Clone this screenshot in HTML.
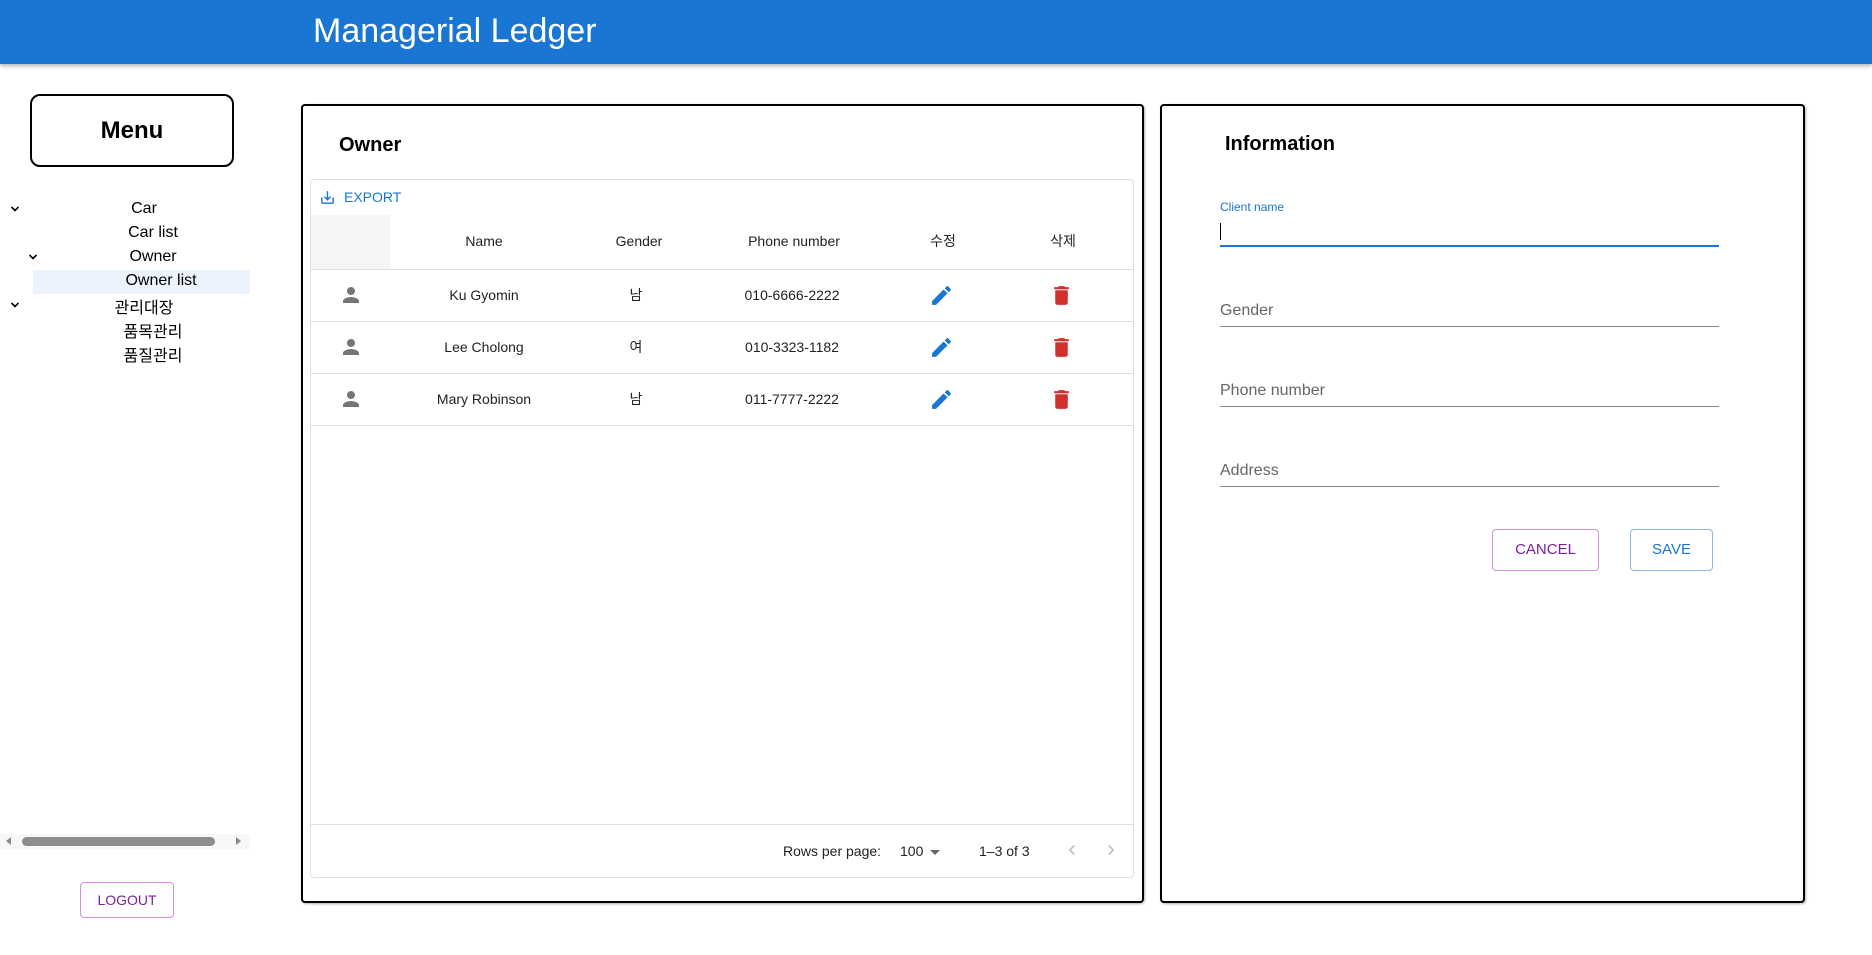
<!DOCTYPE html>
<html><head><meta charset="utf-8"><style>
*{box-sizing:border-box;margin:0;padding:0}
body{width:1872px;height:955px;background:#fff;font-family:"Liberation Sans","Noto Sans CJK KR",sans-serif;position:relative;overflow:hidden;color:#000}
.a{position:absolute}
.hdr{left:0;top:0;width:1872px;height:64px;background:#1976d2;box-shadow:0 2px 4px rgba(0,0,0,.3)}
.hdr span{position:absolute;left:313px;top:12px;color:#fff;font-size:34px}
.menu{left:30px;top:94px;width:204px;height:73px;border:2px solid #000;border-radius:10px;font-weight:bold;font-size:24px;text-align:center;line-height:69px}
.t{font-size:16px;transform:translateX(-50%);white-space:nowrap}
.panel{border:2px solid #000;border-radius:4px;box-shadow:1px 1px 2px rgba(0,0,0,.3)}
.grid{left:310px;top:179px;width:824px;height:699px;border:1px solid #e0e0e0;border-radius:4px}
.c{font-size:14px;color:#222;transform:translate(-50%,-50%);white-space:nowrap}
.line{height:1px;background:#e0e0e0}
.lbl{font-size:16px;color:#666}
.ul{height:1px;background:#888;width:499px;left:1220px}
.btn{border:1px solid;border-radius:4px;font-size:15px;text-align:center}
</style></head><body>
<div class="a hdr"><span>Managerial Ledger</span></div>
<div class="a menu">Menu</div>

<svg class="a" style="left:10px;top:205px" width="10" height="8" viewBox="0 0 10 8"><path d="M1.5 2 5 5.5 8.5 2" fill="none" stroke="#000" stroke-width="1.6"/></svg>
<div class="a t" style="left:144px;top:200px">Car</div>
<div class="a t" style="left:153px;top:224px">Car list</div>
<svg class="a" style="left:28px;top:253px" width="10" height="8" viewBox="0 0 10 8"><path d="M1.5 2 5 5.5 8.5 2" fill="none" stroke="#000" stroke-width="1.6"/></svg>
<div class="a t" style="left:153px;top:248px">Owner</div>
<div class="a" style="left:33px;top:270px;width:217px;height:24px;background:#edf3fc"></div>
<div class="a t" style="left:161px;top:272px">Owner list</div>
<svg class="a" style="left:10px;top:301px" width="10" height="8" viewBox="0 0 10 8"><path d="M1.5 2 5 5.5 8.5 2" fill="none" stroke="#000" stroke-width="1.6"/></svg>
<div class="a t" style="left:144px;top:294px">관리대장</div>
<div class="a t" style="left:153px;top:318px">품목관리</div>
<div class="a t" style="left:153px;top:342px">품질관리</div>

<div class="a" style="left:0;top:834px;width:250px;height:15px;background:#f7f7f7"></div>
<div class="a" style="left:6px;top:837px;width:0;height:0;border-top:4px solid transparent;border-bottom:4px solid transparent;border-right:5px solid #888"></div>
<div class="a" style="left:236px;top:837px;width:0;height:0;border-top:4px solid transparent;border-bottom:4px solid transparent;border-left:5px solid #888"></div>
<div class="a" style="left:22px;top:837px;width:193px;height:9px;background:#8d8d8d;border-radius:5px"></div>

<div class="a btn" style="left:80px;top:882px;width:94px;height:36px;line-height:34px;color:#7b1fa2;border-color:#ce93d8;font-size:14px">LOGOUT</div>

<div class="a panel" style="left:301px;top:104px;width:843px;height:799px"></div>
<div class="a" style="left:339px;top:134px;font-size:20px;font-weight:bold">Owner</div>
<div class="a grid"></div>
<svg class="a" style="left:319px;top:189px" width="17" height="17" viewBox="0 0 24 24"><path fill="#1976d2" d="M19 12v7H5v-7H3v7c0 1.1.9 2 2 2h14c1.1 0 2-.9 2-2v-7h-2zm-6 .67 2.59-2.58L17 11.5l-5 5-5-5 1.41-1.41L11 12.67V3h2z"/></svg>
<div class="a" style="left:344px;top:189px;font-size:14px;color:#1976d2">EXPORT</div>
<div class="a" style="left:311px;top:215px;width:79px;height:55px;background:#f5f5f5"></div>
<div class="a c" style="left:484px;top:241px">Name</div>
<div class="a c" style="left:639px;top:241px">Gender</div>
<div class="a c" style="left:794px;top:241px">Phone number</div>
<div class="a c" style="left:943px;top:241px">수정</div>
<div class="a c" style="left:1063px;top:241px">삭제</div>
<div class="a line" style="left:311px;top:269px;width:822px"></div>
<div class="a line" style="left:311px;top:321px;width:822px"></div>
<div class="a line" style="left:311px;top:373px;width:822px"></div>
<div class="a line" style="left:311px;top:425px;width:822px"></div>
<div class="a line" style="left:311px;top:824px;width:822px"></div>

<div class="a c" style="left:484px;top:295px">Ku Gyomin</div><div class="a c" style="left:636px;top:295px">남</div><div class="a c" style="left:792px;top:295px">010-6666-2222</div>
<div class="a c" style="left:484px;top:347px">Lee Cholong</div><div class="a c" style="left:636px;top:347px">여</div><div class="a c" style="left:792px;top:347px">010-3323-1182</div>
<div class="a c" style="left:484px;top:399px">Mary Robinson</div><div class="a c" style="left:636px;top:399px">남</div><div class="a c" style="left:792px;top:399px">011-7777-2222</div>

<svg class="a" style="left:339px;top:283px" width="24" height="24" viewBox="0 0 24 24"><path fill="#757575" d="M12 12c2.21 0 4-1.790 4-4s-1.79-4-4-4-4 1.79-4 4 1.79 4 4 4zm0 2c-2.67 0-8 1.34-8 4v2h16v-2c0-2.66-5.33-4-8-4z"/></svg>
<svg class="a" style="left:339px;top:335px" width="24" height="24" viewBox="0 0 24 24"><path fill="#757575" d="M12 12c2.21 0 4-1.79 4-4s-1.79-4-4-4-4 1.79-4 4 1.79 4 4 4zm0 2c-2.67 0-8 1.34-8 4v2h16v-2c0-2.66-5.33-4-8-4z"/></svg>
<svg class="a" style="left:339px;top:387px" width="24" height="24" viewBox="0 0 24 24"><path fill="#757575" d="M12 12c2.21 0 4-1.79 4-4s-1.79-4-4-4-4 1.79-4 4 1.79 4 4 4zm0 2c-2.67 0-8 1.34-8 4v2h16v-2c0-2.66-5.33-4-8-4z"/></svg>

<svg class="a" style="left:929px;top:283px" width="25" height="25" viewBox="0 0 24 24"><path fill="#1976d2" d="M3 17.25V21h3.75L17.81 9.94l-3.75-3.75L3 17.25zM20.71 7.04a.996.996 0 0 0 0-1.41l-2.34-2.34a.996.996 0 0 0-1.41 0l-1.83 1.83 3.75 3.75 1.83-1.83z"/></svg>
<svg class="a" style="left:929px;top:335px" width="25" height="25" viewBox="0 0 24 24"><path fill="#1976d2" d="M3 17.25V21h3.75L17.81 9.94l-3.75-3.75L3 17.25zM20.71 7.04a.996.996 0 0 0 0-1.41l-2.34-2.34a.996.996 0 0 0-1.41 0l-1.83 1.83 3.75 3.75 1.83-1.83z"/></svg>
<svg class="a" style="left:929px;top:387px" width="25" height="25" viewBox="0 0 24 24"><path fill="#1976d2" d="M3 17.25V21h3.75L17.81 9.94l-3.75-3.75L3 17.25zM20.71 7.04a.996.996 0 0 0 0-1.41l-2.34-2.34a.996.996 0 0 0-1.41 0l-1.83 1.83 3.75 3.75 1.83-1.83z"/></svg>

<svg class="a" style="left:1049px;top:283px" width="25" height="25" viewBox="0 0 24 24"><path fill="#d32f2f" d="M6 19c0 1.1.9 2 2 2h8c1.1 0 2-.9 2-2V7H6v12zM19 4h-3.5l-1-1h-5l-1 1H5v2h14V4z"/></svg>
<svg class="a" style="left:1049px;top:335px" width="25" height="25" viewBox="0 0 24 24"><path fill="#d32f2f" d="M6 19c0 1.1.9 2 2 2h8c1.1 0 2-.9 2-2V7H6v12zM19 4h-3.5l-1-1h-5l-1 1H5v2h14V4z"/></svg>
<svg class="a" style="left:1049px;top:387px" width="25" height="25" viewBox="0 0 24 24"><path fill="#d32f2f" d="M6 19c0 1.1.9 2 2 2h8c1.1 0 2-.9 2-2V7H6v12zM19 4h-3.5l-1-1h-5l-1 1H5v2h14V4z"/></svg>

<div class="a" style="left:783px;top:843px;font-size:14px;color:#222">Rows per page:</div>
<div class="a" style="left:900px;top:843px;font-size:14px;color:#222">100</div>
<div class="a" style="left:930px;top:850px;width:0;height:0;border-left:5px solid transparent;border-right:5px solid transparent;border-top:5px solid #666"></div>
<div class="a" style="left:979px;top:843px;font-size:14px;color:#222">1–3 of 3</div>
<svg class="a" style="left:1062px;top:840px" width="20" height="20" viewBox="0 0 24 24"><path fill="#bdbdbd" d="M15.41 7.41 14 6l-6 6 6 6 1.41-1.41L10.83 12z"/></svg>
<svg class="a" style="left:1101px;top:840px" width="20" height="20" viewBox="0 0 24 24"><path fill="#bdbdbd" d="M10 6 8.59 7.41 13.17 12l-4.58 4.59L10 18l6-6z"/></svg>

<div class="a panel" style="left:1160px;top:104px;width:645px;height:799px"></div>
<div class="a" style="left:1225px;top:133px;font-size:20px;font-weight:bold">Information</div>
<div class="a" style="left:1220px;top:200px;font-size:12px;color:#1976d2">Client name</div>
<div class="a" style="left:1220px;top:223px;width:1px;height:17px;background:#000"></div>
<div class="a" style="left:1220px;top:245px;width:499px;height:2px;background:#1976d2"></div>
<div class="a lbl" style="left:1220px;top:302px">Gender</div>
<div class="a ul" style="top:326px"></div>
<div class="a lbl" style="left:1220px;top:382px">Phone number</div>
<div class="a ul" style="top:406px"></div>
<div class="a lbl" style="left:1220px;top:462px">Address</div>
<div class="a ul" style="top:486px"></div>
<div class="a btn" style="left:1492px;top:529px;width:107px;height:42px;line-height:40px;color:#7b1fa2;border-color:#ce93d8">CANCEL</div>
<div class="a btn" style="left:1630px;top:529px;width:83px;height:42px;line-height:40px;color:#1976d2;border-color:#90b8dc">SAVE</div>
</body></html>
